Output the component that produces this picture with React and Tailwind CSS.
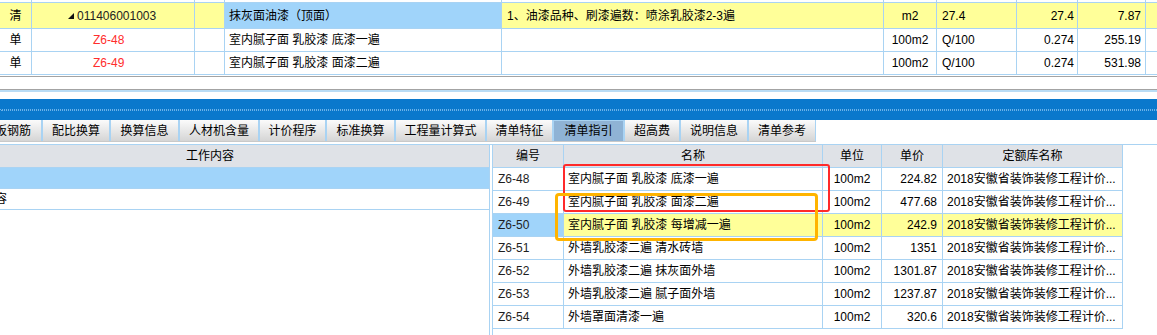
import React from 'react';

const line = 'border-[#a9d3f3]';

const topRows = [
  {
    bg: ['bg-[#ffff99]', 'bg-[#ffff99]', 'bg-[#ffff99]', 'bg-[#a0d4fa]', 'bg-[#ffff99]', 'bg-[#ffff99]', 'bg-[#ffff99]', 'bg-[#ffff99]', 'bg-[#ffff99]', 'bg-[#ffff99]'],
    h: 'h-[26px]',
    kind: '清',
    code: '011406001003',
    group: true,
    name: '抹灰面油漆（顶面）',
    feature: '1、油漆品种、刷漆遍数：喷涂乳胶漆2-3遍',
    unit: 'm2',
    expr: '27.4',
    qty: '27.4',
    price: '7.87',
  },
  {
    h: 'h-[23px]',
    kind: '单',
    code: 'Z6-48',
    name: '室内腻子面 乳胶漆 底漆一遍',
    feature: '',
    unit: '100m2',
    expr: 'Q/100',
    qty: '0.274',
    price: '255.19',
  },
  {
    h: 'h-[23px]',
    kind: '单',
    code: 'Z6-49',
    name: '室内腻子面 乳胶漆 面漆二遍',
    feature: '',
    unit: '100m2',
    expr: 'Q/100',
    qty: '0.274',
    price: '531.98',
  },
];

const tabs = [
  { label: '板钢筋', w: 'w-[58px] -ml-[16px]' },
  { label: '配比换算', w: 'w-[68px]' },
  { label: '换算信息', w: 'w-[69px]' },
  { label: '人材机含量', w: 'w-[80px]' },
  { label: '计价程序', w: 'w-[67px]' },
  { label: '标准换算', w: 'w-[69px]' },
  { label: '工程量计算式', w: 'w-[91px]' },
  { label: '清单特征', w: 'w-[67px]' },
  { label: '清单指引', w: 'w-[71px]', active: true },
  { label: '超高费', w: 'w-[56px]' },
  { label: '说明信息', w: 'w-[68px]' },
  { label: '清单参考', w: 'w-[68px]' },
];

const guides = [
  ['Z6-48', '室内腻子面 乳胶漆 底漆一遍', '224.82'],
  ['Z6-49', '室内腻子面 乳胶漆 面漆二遍', '477.68'],
  ['Z6-50', '室内腻子面 乳胶漆 每增减一遍', '242.9', true],
  ['Z6-51', '外墙乳胶漆二遍 清水砖墙', '1351'],
  ['Z6-52', '外墙乳胶漆二遍 抹灰面外墙', '1301.87'],
  ['Z6-53', '外墙乳胶漆二遍 腻子面外墙', '1237.87'],
  ['Z6-54', '外墙罩面清漆一遍', '320.6'],
];

function TopRow({ row }) {
  const bg = row.bg || [];
  const c = `flex items-center h-full border-r ${line}`;
  return (
    <div className={`flex ${row.h} border-b ${line}`}>
      <div className={`${c} w-[32px] justify-center ${bg[0] || ''}`}>{row.kind}</div>
      <div className={`${c} w-[163px] ${row.group ? 'pl-[36px]' : 'pl-[61px]'} ${bg[1] || ''}`}>
        {row.group ? (
          <>
            <svg width="6" height="6" viewBox="0 0 6 6" className="mr-[3px]">
              <polygon points="6,0 6,6 0,6" fill="#111" />
            </svg>
            <span className="text-[#222]">{row.code}</span>
          </>
        ) : (
          <span className="text-[#ff2d2d]">{row.code}</span>
        )}
      </div>
      <div className={`${c} w-[30px] ${bg[2] || ''}`} />
      <div className={`${c} w-[277px] pl-[4px] ${bg[3] || ''}`}>{row.name}</div>
      <div className={`${c} w-[382px] pl-[5px] ${bg[4] || ''}`}>{row.feature}</div>
      <div className={`${c} w-[53px] justify-center ${bg[5] || ''}`}>{row.unit}</div>
      <div className={`${c} w-[80px] pl-[5px] ${bg[6] || ''}`}>{row.expr}</div>
      <div className={`${c} w-[61px] justify-end pr-[3px] ${bg[7] || ''}`}>{row.qty}</div>
      <div className={`${c} w-[68px] justify-end pr-[4px] ${bg[8] || ''}`}>{row.price}</div>
      <div className={`flex-1 h-full ${bg[9] || ''}`} />
    </div>
  );
}

export default function App() {
  return (
    <div className="relative w-[1157px] h-[335px] overflow-hidden bg-white text-[12px] leading-none text-black font-['Liberation_Sans','Noto_Sans_CJK_SC',sans-serif]">
      {/* upper list */}
      <div className="h-[76px]">
        <div className="flex h-[2px]">
          <div className={`w-[32px] border-r ${line}`} />
          <div className={`w-[163px] border-r ${line}`} />
          <div className={`w-[30px] border-r ${line}`} />
          <div className={`w-[277px] border-r ${line}`} />
          <div className={`w-[382px] border-r ${line}`} />
          <div className={`w-[53px] border-r ${line}`} />
          <div className={`w-[80px] border-r ${line}`} />
          <div className={`w-[61px] border-r ${line}`} />
          <div className={`w-[68px] border-r ${line}`} />
        </div>
        <div className={`border-t ${line}`}>
          {topRows.map((r, i) => (
            <TopRow key={i} row={r} />
          ))}
        </div>
      </div>
      <div className="h-[1px] bg-[#a3a3a3]" />
      <div className="h-[12px]" />
      <div className="h-[1px] bg-[#a3a3a3]" />
      <div className="h-[2px] bg-[#b9dcf5]" />
      <div className="h-[7px]" />

      {/* splitter grip */}
      <div className="h-[21px] bg-[#0a78cc] flex flex-col justify-center">
        <div className="h-0 border-t border-dotted border-[#6cb2e8]" />
        <div className="h-0 ml-[1px] border-t border-dotted border-[#6cb2e8]" />
      </div>

      {/* tabs */}
      <div className="flex h-[22px] overflow-hidden">
        <div className="flex h-[22px] border-b border-[#c9c9c9]">
          {tabs.map((t) => (
            <div
              key={t.label}
              className={`${t.w} shrink-0 h-full flex items-center justify-center border-x border-[#a9d3f3] ${
                t.active ? 'bg-[#8fb3d5] border-t' : 'bg-linear-to-b from-[#fbfbfb] to-[#d5d5d5]'
              }`}
            >
              {t.label}
            </div>
          ))}
        </div>
      </div>
      <div className="h-[2px]" />

      {/* lower panels */}
      <div className={`flex h-[191px] border-t ${line}`}>
        <div className={`w-[490px] overflow-hidden border-r ${line}`}>
          <div className="-ml-[69px] w-[558px]">
            <div className={`h-[23px] bg-[#dfe2e7] border-b ${line} flex items-center justify-center`}>工作内容</div>
            <div className={`h-[21px] bg-[#a0d4fa] border-b ${line}`} />
            <div className={`h-[21px] border-b ${line} flex items-center pl-[4px]`}>详见工作内容</div>
          </div>
        </div>
        <div className="w-[2px]" />
        <div className={`flex-1 border-l ${line}`}>
          <div className="w-[630px]">
            <div className={`flex h-[23px] bg-[#dfe2e7] border-b ${line}`}>
              <div className={`w-[71px] border-r ${line} flex items-center justify-center`}>编号</div>
              <div className={`w-[259px] border-r ${line} flex items-center justify-center`}>名称</div>
              <div className={`w-[59px] border-r ${line} flex items-center justify-center`}>单位</div>
              <div className={`w-[61px] border-r ${line} flex items-center justify-center`}>单价</div>
              <div className={`w-[180px] border-r ${line} flex items-center justify-center`}>定额库名称</div>
            </div>
            {guides.map(([code, name, price, hl]) => (
              <div key={code} className={`flex h-[23px] border-b ${line}`}>
                <div className={`w-[71px] border-r ${line} flex items-center pl-[5px] text-[#1e1e1e] ${hl ? 'bg-[#a0d4fa]' : ''}`}>{code}</div>
                <div className={`w-[259px] border-r ${line} flex items-center pl-[4px] ${hl ? 'bg-[#ffff99]' : ''}`}>{name}</div>
                <div className={`w-[59px] border-r ${line} flex items-center justify-center ${hl ? 'bg-[#ffff99]' : ''}`}>100m2</div>
                <div className={`w-[61px] border-r ${line} flex items-center justify-end pr-[5px] ${hl ? 'bg-[#ffff99]' : ''}`}>{price}</div>
                <div className={`w-[180px] border-r ${line} flex items-center pl-[4px] whitespace-nowrap overflow-hidden ${hl ? 'bg-[#ffff99]' : ''}`}>2018安徽省装饰装修工程计价...</div>
              </div>
            ))}
          </div>
        </div>
      </div>

      {/* annotation boxes */}
      <div className="absolute left-[563px] top-[164px] w-[267px] h-[48px] border-2 border-[#ff2a2a] rounded-[3px]" />
      <div className="absolute left-[555px] top-[193px] w-[263px] h-[48px] border-[3px] border-[#ffb400] rounded-[4px]" />
    </div>
  );
}
